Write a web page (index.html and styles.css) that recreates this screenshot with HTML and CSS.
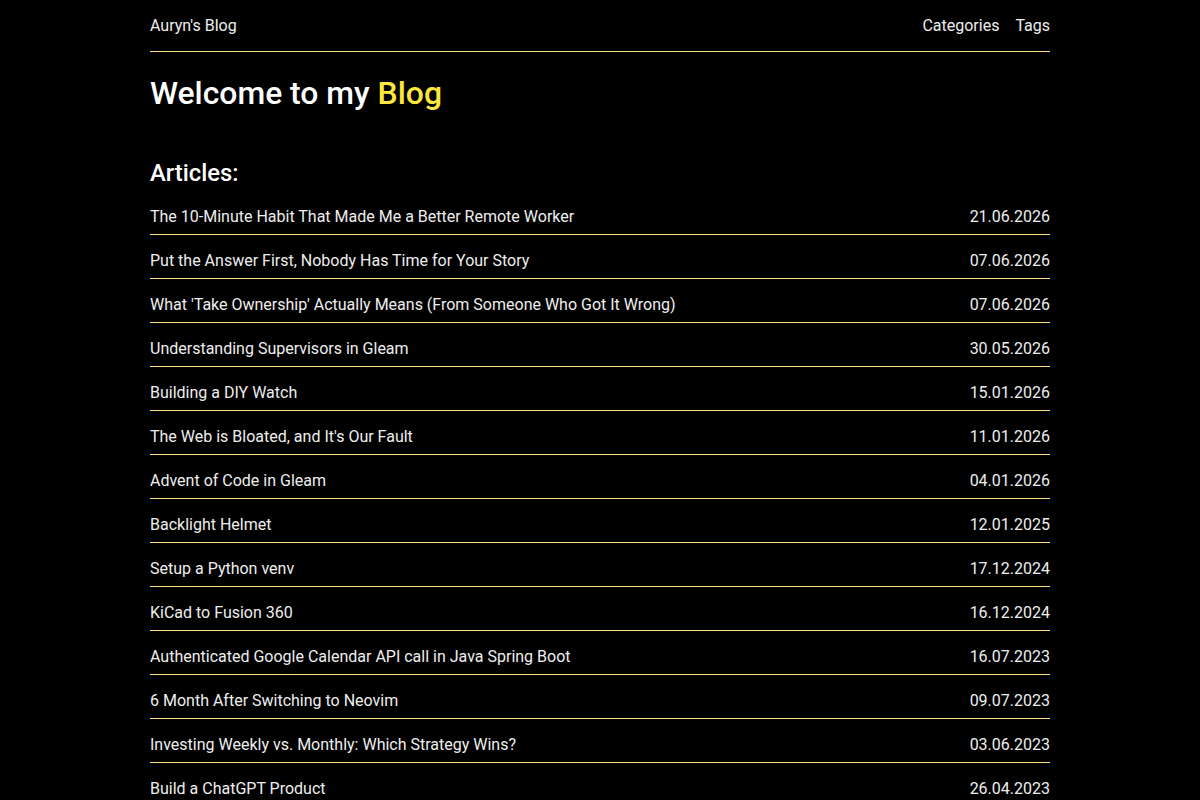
FILE: index.html
```html
<!DOCTYPE html>
<html lang="en">
<head>
    <meta charset="UTF-8">
    <meta name="viewport" content="width=device-width, initial-scale=1.0">
    <title>Auryn's Blog</title>
    <link rel="stylesheet" href="styles.css">
</head>
<body>
    <div class="page">
        <!-- Top bar -->
        <header class="topbar">
            <a class="brand" href="#">Auryn's Blog</a>
            <nav class="nav">
                <a href="#">Categories</a>
                <a href="#">Tags</a>
            </nav>
        </header>

        <h1 class="title">Welcome to my <span class="accent">Blog</span></h1>

        <h2 class="section-title">Articles:</h2>
        <ul class="articles">
            <li class="article"><a href="#">The 10-Minute Habit That Made Me a Better Remote Worker</a><span class="date">21.06.2026</span></li>
            <li class="article"><a href="#">Put the Answer First, Nobody Has Time for Your Story</a><span class="date">07.06.2026</span></li>
            <li class="article"><a href="#">What 'Take Ownership' Actually Means (From Someone Who Got It Wrong)</a><span class="date">07.06.2026</span></li>
            <li class="article"><a href="#">Understanding Supervisors in Gleam</a><span class="date">30.05.2026</span></li>
            <li class="article"><a href="#">Building a DIY Watch</a><span class="date">15.01.2026</span></li>
            <li class="article"><a href="#">The Web is Bloated, and It's Our Fault</a><span class="date">11.01.2026</span></li>
            <li class="article"><a href="#">Advent of Code in Gleam</a><span class="date">04.01.2026</span></li>
            <li class="article"><a href="#">Backlight Helmet</a><span class="date">12.01.2025</span></li>
            <li class="article"><a href="#">Setup a Python venv</a><span class="date">17.12.2024</span></li>
            <li class="article"><a href="#">KiCad to Fusion 360</a><span class="date">16.12.2024</span></li>
            <li class="article"><a href="#">Authenticated Google Calendar API call in Java Spring Boot</a><span class="date">16.07.2023</span></li>
            <li class="article"><a href="#">6 Month After Switching to Neovim</a><span class="date">09.07.2023</span></li>
            <li class="article"><a href="#">Investing Weekly vs. Monthly: Which Strategy Wins?</a><span class="date">03.06.2023</span></li>
            <li class="article"><a href="#">Build a ChatGPT Product</a><span class="date">26.04.2023</span></li>
        </ul>
    </div>
</body>
</html>
```

FILE: styles.css
```css
body {
    margin: 0;
    padding: 0;
    background: #000;
    color: #eeeeee;
    font-family: Roboto, 'Liberation Sans', sans-serif;
    font-size: 16px;
    line-height: 24px;
}

a {
    color: inherit;
    text-decoration: none;
}

.page {
    width: 900px;
    margin: 0 auto;
}

.topbar {
    display: flex;
    justify-content: space-between;
    padding: 14px 0 13px;
    border-bottom: 1px solid #fce38a;
}

.nav {
    display: flex;
    gap: 16px;
}

.title {
    margin: 21px 0 0;
    font-size: 31.85px;
    line-height: 40px;
    font-weight: 500;
    color: #fff;
}

.accent {
    color: #fbe83b;
}

.section-title {
    margin: 44px 0 2px;
    font-size: 23.8px;
    line-height: 32px;
    font-weight: 500;
    color: #fff;
}

.articles {
    list-style: none;
    margin: 0;
    padding: 0;
}

.article {
    display: flex;
    justify-content: space-between;
    padding: 14px 0 5px;
    border-bottom: 1px solid #fce38a;
}
```
